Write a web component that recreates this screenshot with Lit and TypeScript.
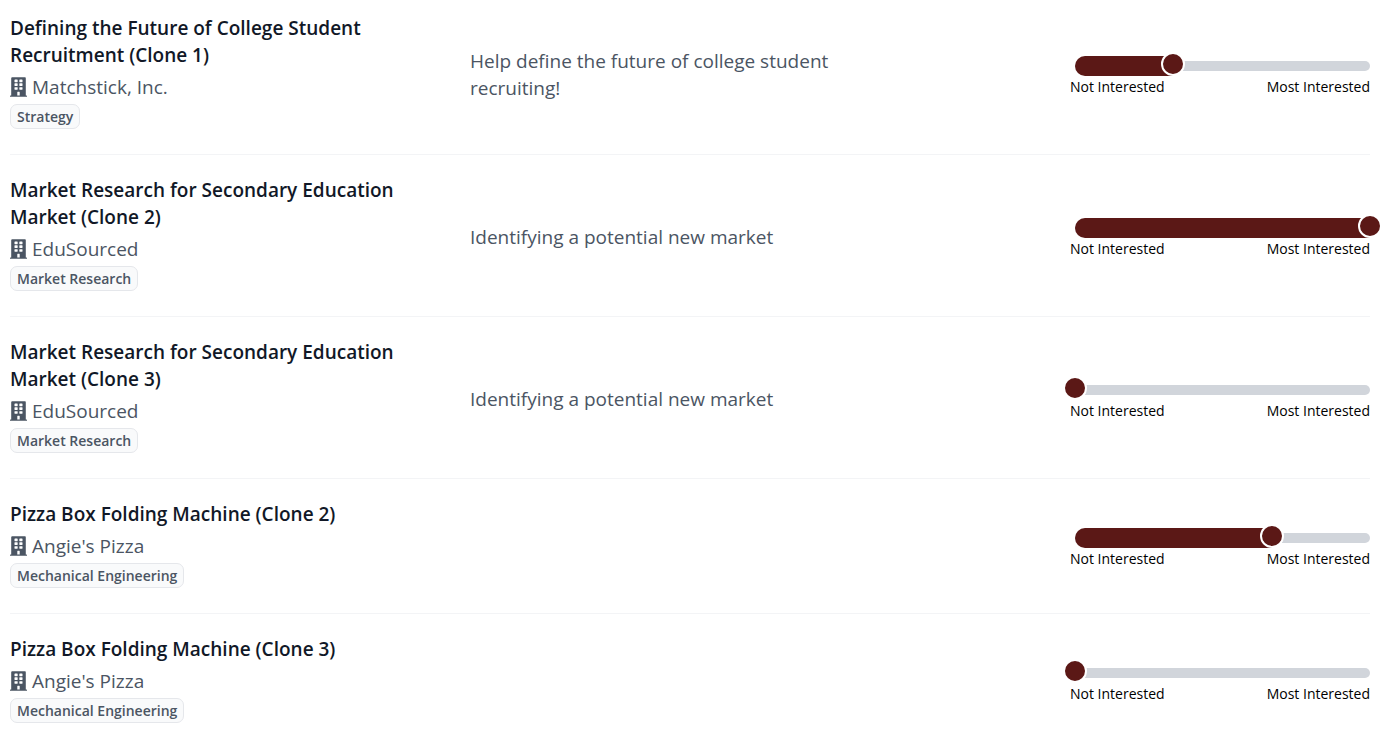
import { LitElement, html, css, svg, nothing } from "lit";
import { customElement, property, state } from "lit/decorators.js";
import { styleMap } from "lit/directives/style-map.js";

interface Project {
  title: string;
  company: string;
  tag: string;
  summary: string;
  interest: number;
}

const MAX_INTEREST = 3;

const windowRows = [60, 160, 260];

const buildingIcon = html`<svg class="icon" viewBox="0 0 448 512" aria-hidden="true">
  ${svg`<path fill="currentColor" d="M436 480h-20V24c0-13.255-10.745-24-24-24H56C42.745 0 32 10.745 32 24v456H12c-6.627 0-12 5.373-12 12v20h448v-20c0-6.627-5.373-12-12-12zM256 480h-64v-84c0-6.627 5.373-12 12-12h40c6.627 0 12 5.373 12 12z"/>
  ${windowRows.map(
    (y) => svg`<rect class="pane" x="118" y=${y} width="84" height="70" rx="12"/><rect class="pane" x="246" y=${y} width="84" height="70" rx="12"/>`,
  )}`}
</svg>`;

@customElement("interest-slider")
export class InterestSlider extends LitElement {
  @property({ type: Number }) value = 0;
  @property() name = "";

  static styles = css`
    :host {
      display: block;
      padding-top: 6px;
    }
    .slider {
      display: grid;
      align-items: center;
      height: 20px;
      margin-left: 5px;
    }
    .track,
    .fill,
    .range {
      grid-area: 1 / 1;
    }
    .track {
      height: 10px;
      border-radius: 5px;
      background: #d1d5db;
    }
    .fill {
      height: 20px;
      border-radius: 10px 0 0 10px;
      background: #5b1816;
    }
    .range {
      appearance: none;
      height: 24px;
      margin: -4px -12px 0;
      background: none;
      cursor: pointer;
    }
    .range::-webkit-slider-runnable-track {
      height: 24px;
      background: none;
    }
    .range::-webkit-slider-thumb {
      appearance: none;
      box-sizing: border-box;
      width: 24px;
      height: 24px;
      border: 2px solid #fff;
      border-radius: 50%;
      background: #5b1816;
    }
    .ends {
      display: flex;
      justify-content: space-between;
      margin-top: 1px;
      font-size: 14px;
      line-height: 20px;
      color: #000;
    }
  `;

  private onInput(e: Event) {
    this.value = Number((e.target as HTMLInputElement).value);
  }

  render() {
    const fill = { width: `${(this.value / MAX_INTEREST) * 100}%` };
    return html`
      <div class="slider">
        <div class="track"></div>
        <div class="fill" style=${styleMap(fill)}></div>
        <input
          class="range"
          type="range"
          min="0"
          max=${MAX_INTEREST}
          step="1"
          aria-label=${`Interest in ${this.name}`}
          .value=${String(this.value)}
          @input=${this.onInput}
        />
      </div>
      <div class="ends"><span>Not Interested</span><span>Most Interested</span></div>
    `;
  }
}

@customElement("app-root")
export class AppRoot extends LitElement {
  @state() private projects: Project[] = [
    {
      title: "Defining the Future of College Student Recruitment (Clone 1)",
      company: "Matchstick, Inc.",
      tag: "Strategy",
      summary: "Help define the future of college student recruiting!",
      interest: 1,
    },
    {
      title: "Market Research for Secondary Education Market (Clone 2)",
      company: "EduSourced",
      tag: "Market Research",
      summary: "Identifying a potential new market",
      interest: 3,
    },
    {
      title: "Market Research for Secondary Education Market (Clone 3)",
      company: "EduSourced",
      tag: "Market Research",
      summary: "Identifying a potential new market",
      interest: 0,
    },
    {
      title: "Pizza Box Folding Machine (Clone 2)",
      company: "Angie's Pizza",
      tag: "Mechanical Engineering",
      summary: "",
      interest: 2,
    },
    {
      title: "Pizza Box Folding Machine (Clone 3)",
      company: "Angie's Pizza",
      tag: "Mechanical Engineering",
      summary: "",
      interest: 0,
    },
  ];

  static styles = css`
    :host {
      display: block;
      overflow: hidden;
      background: #fff;
      font-family: "Segoe UI", "Open Sans", "Noto Sans", sans-serif;
      font-size: 19px;
      line-height: 27px;
      color: #4b5563;
    }
    .list {
      margin: -7px 16px 0 10px;
      padding: 0;
      list-style: none;
    }
    .row {
      display: grid;
      grid-template-columns: minmax(0, 460fr) minmax(0, 600fr) 300px;
      align-items: center;
      padding: 22px 0 23px;
      border-bottom: 1px solid #f3f4f6;
    }
    .row:last-child {
      border-bottom: 0;
    }
    .project {
      display: flex;
      flex-direction: column;
      align-items: flex-start;
      padding: 0 56px 2px 0;
    }
    .title {
      margin: 0;
      font-size: 19px;
      font-weight: 600;
      line-height: 27px;
      color: #111827;
    }
    .company {
      display: flex;
      align-items: center;
      gap: 5px;
      margin-top: 5px;
    }
    .icon {
      width: 17px;
      height: 20px;
      margin-bottom: 2px;
    }
    .pane {
      fill: #fff;
    }
    .tag {
      box-sizing: border-box;
      height: 25px;
      margin-top: 3px;
      padding: 0 6px;
      border: 1px solid #e5e7eb;
      border-radius: 7px;
      background: #f9fafb;
      font-size: 14px;
      font-weight: 600;
      line-height: 23px;
    }
    .summary {
      max-width: 400px;
      margin: 0;
      padding-top: 4px;
    }
  `;

  render() {
    return html`
      <ul class="list">
        ${this.projects.map(
          (p) => html`
            <li class="row">
              <div class="project">
                <h2 class="title">${p.title}</h2>
                <div class="company">${buildingIcon}<span>${p.company}</span></div>
                <span class="tag">${p.tag}</span>
              </div>
              <div>${p.summary ? html`<p class="summary">${p.summary}</p>` : nothing}</div>
              <interest-slider .value=${p.interest} .name=${p.title}></interest-slider>
            </li>
          `,
        )}
      </ul>
    `;
  }
}
